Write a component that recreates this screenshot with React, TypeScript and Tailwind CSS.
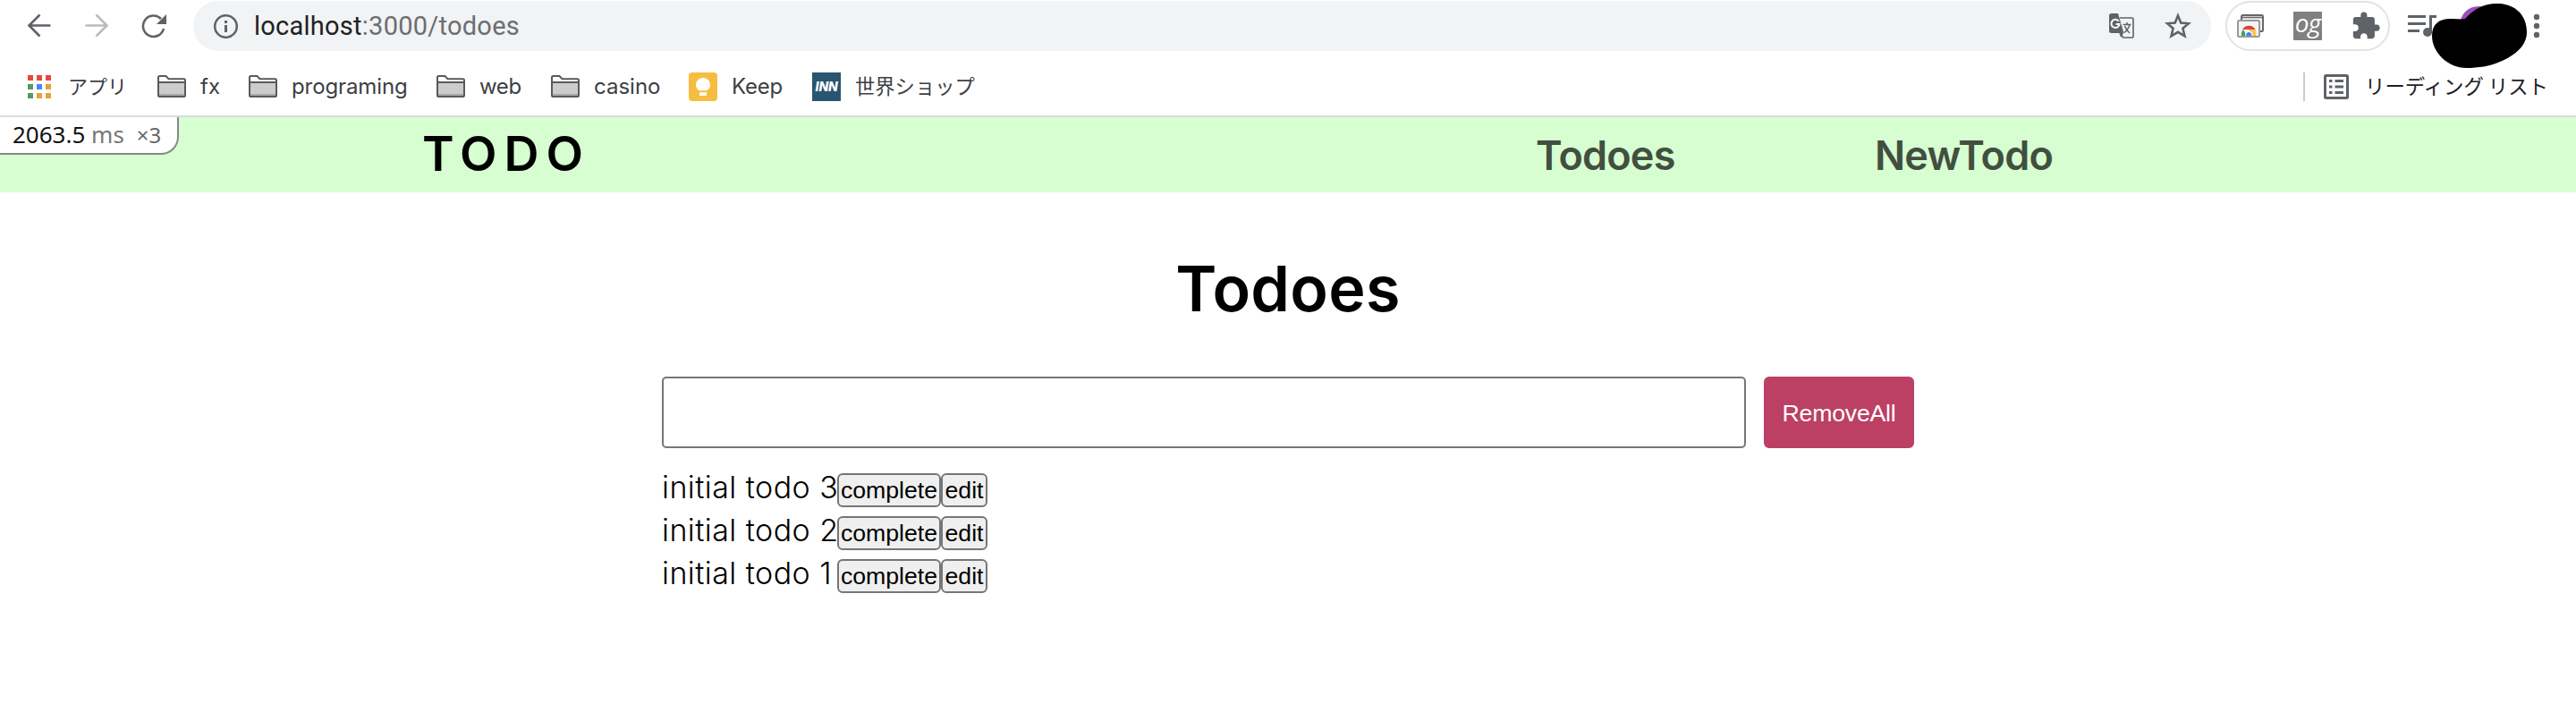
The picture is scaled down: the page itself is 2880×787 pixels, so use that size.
import type { ReactNode } from "react";

function FolderIcon() {
  return (
    <svg className="block h-8 w-8 shrink-0" viewBox="0 0 32 32" fill="none">
      <path d="M1 26V5.500Q1 4 2.500 4H9.500l3 3.200H29.500Q31 7.200 31 8.700V26Q31 27 30 27H2Q1 27 1 26Z" fill="#fff" stroke="#5a5a5a" strokeWidth="2" />
      <path d="M2 11H30V26H2Z" fill="#ccc" />
      <path d="M2 24H30V26H2Z" fill="#a8a8a8" />
      <path d="M1 11H31" stroke="#5a5a5a" strokeWidth="2" />
    </svg>
  );
}

function AppsIcon() {
  const colors = ["#e34a3e", "#e34a3e", "#e34a3e", "#559a5e", "#4689f2", "#e5a236", "#559a5e", "#e5a236", "#e5a236"];
  return (
    <svg className="block h-[26px] w-[26px] shrink-0" viewBox="0 0 26 26">
      {colors.map((c, i) => (
        <rect key={i} x={(i % 3) * 10} y={Math.floor(i / 3) * 10} width="6" height="6" fill={c} />
      ))}
    </svg>
  );
}

function KeepIcon() {
  return (
    <svg className="block h-8 w-8 shrink-0" viewBox="0 0 32 32">
      <rect width="32" height="32" rx="4" fill="#f6bd41" />
      <path d="M16 6a8 8 0 0 0-8 8c0 3 1.600 5 4 6.200h8c2.400-1.200 4-3.200 4-6.200a8 8 0 0 0-8-8ZM12 22.300h8V26h-8Z" fill="#fff" />
    </svg>
  );
}

function InnIcon() {
  return (
    <span className="flex h-8 w-8 shrink-0 items-center justify-center bg-[#2a5570] font-['Inter'] text-[14px] font-extrabold italic leading-none tracking-[-0.2px] text-white">
      INN
    </span>
  );
}

function Bookmark({ icon, label, className, labelClass = "text-[24px]" }: { icon: ReactNode; label: string; className: string; labelClass?: string }) {
  return (
    <div className={`flex h-8 shrink-0 items-center ${className}`}>
      {icon}
      <span className={`whitespace-nowrap font-['Inter','Noto_Sans_CJK_JP',sans-serif] leading-8 text-[#3c4043] ${labelClass}`}>{label}</span>
    </div>
  );
}

function AddressBar() {
  return (
    <div className="flex h-14 w-[2256px] shrink-0 items-center rounded-full bg-[#f1f3f4] pl-[22px]">
      <svg className="block h-7 w-7 shrink-0" viewBox="0 0 28 28" fill="none">
        <circle cx="14.500" cy="14.500" r="12.300" stroke="#5f6368" strokeWidth="2.500" />
        <path d="M13 8h3v3h-3zM13 13h3v8h-3z" fill="#5f6368" />
      </svg>
      <span className="ml-[18px] w-[319px] whitespace-nowrap font-['Roboto',sans-serif] text-[29px] leading-none tracking-[0.25px] text-[#6b6e72]">
        <span className="text-[#202124]">localhost</span>:3000/todoes
      </span>
      <svg className="ml-[1754px] block h-[30px] w-[30px] shrink-0" viewBox="0 0 30 30" fill="none">
        <path d="M13 6h13.500a1.500 1.500 0 0 1 1.500 1.500v19a1.500 1.500 0 0 1-1.500 1.500H16.500L13 20" fill="#f1f3f4" stroke="#5f6368" strokeWidth="1.600" />
        <path d="M3.500 1H11l6.500 22H3.500A2.500 2.500 0 0 1 1 20.500v-17A2.500 2.500 0 0 1 3.500 1Z" fill="#5f6368" />
        <path d="M12 22h5.500L14 28Z" fill="#5f6368" />
        <path d="M11.800 9.800A4.600 4.600 0 1 0 12.600 13H8.600" stroke="#fff" strokeWidth="2" />
        <path d="M16.500 13.500h9M21 11v2.500M24 13.500c-1 4-3.500 7-6 9M18.500 15c1.200 3.500 3 6 5.500 8" stroke="#5f6368" strokeWidth="1.500" />
      </svg>
      <svg className="ml-[33px] block h-[30px] w-[30px] shrink-0" viewBox="0 0 30 30" fill="none">
        <path d="M15 3.500l3.300 8 8.700.700-6.600 5.600 2.100 8.500L15 21.800l-7.500 4.500 2.100-8.500L3 12.200l8.700-.700Z" stroke="#5f6368" strokeWidth="2.600" />
      </svg>
    </div>
  );
}

function Extensions() {
  return (
    <div className="ml-4 flex h-14 w-[184px] shrink-0 items-center rounded-full border-2 border-[#e3e3e3] pl-[11px]">
      <svg className="block h-7 w-[30px] shrink-0" viewBox="0 0 30 28" fill="none">
        <rect x="5" y="2" width="24" height="18" rx="1.500" fill="#f2f2f2" stroke="#666" strokeWidth="2" />
        <path d="M5 4.500h24" stroke="#666" strokeWidth="1.500" />
        <rect x="1" y="8" width="24" height="18" rx="1.500" fill="#f4f4f4" stroke="#999" strokeWidth="2" />
        <path d="M5 25a8 8 0 0 1 2-7l4 7Z" fill="#3f9d55" />
        <path d="M6 18a8.200 8.200 0 0 1 14.500 0Z" fill="#cf4a3c" />
        <path d="M13 18h7.500a8 8 0 0 1 1 7H15Z" fill="#f8c94d" />
        <path d="M9.200 25a4.200 4.200 0 1 1 8 0Z" fill="#fff" />
        <path d="M10.200 25a3.100 3.100 0 1 1 6 0Z" fill="#4a80ee" />
      </svg>
      <span className="ml-[33px] flex h-8 w-8 shrink-0 items-center justify-center bg-[#808080] pb-2 font-['Open_Sans',sans-serif] text-[28px] italic leading-none tracking-[-1px] text-white">
        og
      </span>
      <svg className="ml-8 block h-[34px] w-[34px] shrink-0" viewBox="0 0 24 24" fill="#5f6368">
        <path d="M20.500 11H19V7c0-1.100-.900-2-2-2h-4V3.500a2.500 2.500 0 0 0-5 0V5H4c-1.100 0-1.990.900-1.990 2v3.800H3.500c1.490 0 2.700 1.210 2.700 2.700s-1.210 2.700-2.700 2.700H2V20c0 1.100.900 2 2 2h3.800v-1.500c0-1.490 1.210-2.700 2.700-2.700s2.700 1.210 2.700 2.700V22H17c1.100 0 2-.900 2-2v-4h1.500a2.500 2.500 0 0 0 0-5Z" />
      </svg>
    </div>
  );
}

function Toolbar() {
  return (
    <div className="flex h-[58px] items-center pl-[30px]">
      <svg className="block h-7 w-7 shrink-0" viewBox="0 0 28 28" fill="none" stroke="#5f6368" strokeWidth="2.600">
        <path d="M26.500 13.500H2.500M14.500 1.500L2.500 13.500l12 12" />
      </svg>
      <svg className="ml-9 block h-7 w-7 shrink-0" viewBox="0 0 28 28" fill="none" stroke="#bbb" strokeWidth="2.600">
        <path d="M1.500 13.500h24M13.500 1.500l12 12-12 12" />
      </svg>
      <svg className="ml-9 block h-7 w-7 shrink-0" viewBox="0 0 28 28" fill="none">
        <path d="M25 17a11.700 11.700 0 1 1-3-11" stroke="#5f6368" strokeWidth="2.600" />
        <path d="M28 1v11H17Z" fill="#5f6368" />
      </svg>
      <div className="ml-[30px] flex items-center">
        <AddressBar />
        <Extensions />
        <svg className="ml-4 block h-[58px] w-[170px] shrink-0 overflow-visible" viewBox="2688 0 170 58">
          <path d="M2692 18.500h20M2692 26.500h20M2692 34.500h13" stroke="#5f6368" strokeWidth="3" />
          <path d="M2717.500 37V18.500h6.500" fill="none" stroke="#5f6368" strokeWidth="3" />
          <circle cx="2714" cy="36" r="5" fill="#5f6368" />
          <circle cx="2771" cy="28" r="21" fill="#9c4fbb" />
          <path d="M2719 40C2719 27 2727 21 2739 21C2747 21 2752 22 2756 21C2767 9 2778 4 2791 4C2812 4 2825 17 2825 36C2825 51 2812 62 2795 69C2784 74 2770 76 2758 76C2736 76 2719 58 2719 40Z" fill="#000" />
          <circle cx="2836" cy="19" r="3.200" fill="#5f6368" />
          <circle cx="2836" cy="29" r="3.200" fill="#5f6368" />
          <circle cx="2836" cy="39" r="3.200" fill="#5f6368" />
        </svg>
      </div>
    </div>
  );
}

function BookmarksBar() {
  return (
    <div className="flex h-[71px] items-start pl-[31px] pr-[30px] pt-[23px]">
      <Bookmark className="w-[145px]" icon={<AppsIcon />} label="アプリ" labelClass="ml-[19px] text-[22px]" />
      <Bookmark className="w-[102px]" icon={<FolderIcon />} label="fx" labelClass="ml-4 text-[24px]" />
      <Bookmark className="w-[210px]" icon={<FolderIcon />} label="programing" labelClass="ml-4 text-[24px] tracking-[-0.1px]" />
      <Bookmark className="w-[128px]" icon={<FolderIcon />} label="web" labelClass="ml-4 text-[24px] tracking-[-0.4px]" />
      <Bookmark className="w-[154px]" icon={<FolderIcon />} label="casino" labelClass="ml-4 text-[24px]" />
      <Bookmark className="w-[138px]" icon={<KeepIcon />} label="Keep" labelClass="ml-4 text-[24px] tracking-[-0.2px]" />
      <Bookmark className="w-[200px]" icon={<InnIcon />} label="世界ショップ" labelClass="ml-4 text-[22.3px]" />
      <div className="ml-auto flex h-8 w-[275px] shrink-0 items-center border-l-2 border-[#ccc] pl-[21px]">
        <svg className="block h-7 w-7 shrink-0" viewBox="0 0 28 28" fill="none">
          <rect x="1.500" y="1.500" width="25" height="25" rx="1" stroke="#5f6368" strokeWidth="3" />
          <path d="M6 7.500h3.500M6 14h3.500M6 20.500h3.500M12.500 7.500h9.500M12.500 14h9.500M12.500 20.500h9.500" stroke="#5f6368" strokeWidth="3" />
        </svg>
        <span className="ml-[18px] whitespace-nowrap pb-1 font-['Noto_Sans_CJK_JP',sans-serif] text-[22.4px] leading-8 text-[#202124]">リーディング リスト</span>
      </div>
    </div>
  );
}

function TodoRow({ title }: { title: string }) {
  return (
    <li className="flex h-12 items-start">
      <span className="w-[196px] whitespace-nowrap font-['Inter',sans-serif] text-[34px] font-[350] leading-[50px] tracking-[0.45px]">{title}</span>
      <button className="mt-[9px] h-[38px] w-[116px] rounded-[6px] border-2 border-[#767676] bg-[#efefef] text-[26.667px] leading-[34px]">complete</button>
      <button className="mt-[9px] h-[38px] w-[52px] rounded-[6px] border-2 border-[#767676] bg-[#efefef] text-[26.667px] leading-[34px]">edit</button>
    </li>
  );
}

export default function App() {
  return (
    <div className="h-[787px] w-[2880px] overflow-hidden bg-white font-['Liberation_Sans',sans-serif] text-black">
      <div className="h-[131px] border-b-2 border-[#d9dbdd]">
        <Toolbar />
        <BookmarksBar />
      </div>
      <header className="flex h-[84px] items-start bg-[#d6fed0]">
        <div className="h-[42px] w-[200px] shrink-0 whitespace-nowrap rounded-br-[20px] border-b-2 border-r-2 border-[#888] bg-white pl-3.5 font-['Noto_Sans',sans-serif] text-[26px] leading-[38px] text-[#111]">
          2063.5 <span className="text-[#777]">ms</span>
          <span className="ml-3.5 text-[24px] text-[#666]">×3</span>
        </div>
        <div className="ml-[272px] w-[1245px] font-['Inter',sans-serif] text-[54px] font-semibold leading-[82px] tracking-[8px]">TODO</div>
        <nav className="flex font-['Inter',sans-serif] text-[45px] font-semibold leading-[86px] tracking-[-0.8px] text-[#424f40]">
          <a className="w-[379px]">Todoes</a>
          <a>NewTodo</a>
        </nav>
      </header>
      <main>
        <h1 className="mt-[65px] h-[141px] text-center font-['Inter',sans-serif] text-[70px] font-semibold leading-[86px] tracking-[0.3px]">Todoes</h1>
        <div className="mx-auto w-[1400px]">
          <div className="flex gap-5">
            <input className="h-20 w-[1212px] rounded-[5px] border-2 border-[#767676] bg-white px-2 text-[26.667px] outline-none" />
            <button className="h-20 w-[168px] rounded-[6px] bg-[#bb4063] pt-0.5 text-[26.667px] tracking-[-0.2px] text-white">RemoveAll</button>
          </div>
          <ul className="mt-[19px]">
            <TodoRow title="initial todo 3" />
            <TodoRow title="initial todo 2" />
            <TodoRow title="initial todo 1" />
          </ul>
        </div>
      </main>
    </div>
  );
}
